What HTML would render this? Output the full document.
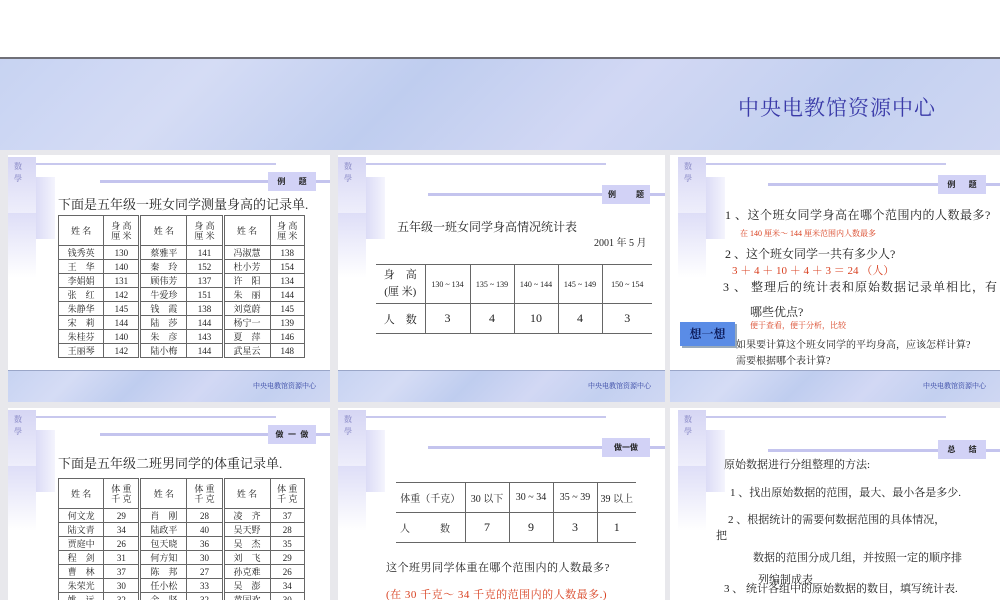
<!DOCTYPE html>
<html><head><meta charset="utf-8">
<style>
*{margin:0;padding:0;box-sizing:border-box}
body{width:1000px;height:600px;overflow:hidden;background:#e8e8ec;position:relative;font-family:"Liberation Serif","Noto Serif CJK SC",serif;color:#222}
.abs{position:absolute}
.tex{background:linear-gradient(135deg,#c7d3f2 0%,#d5dcf5 20%,#bfcdef 40%,#d2d8f4 60%,#c3d0f0 80%,#cfd7f3 100%)}
.slide{position:absolute;background:#fff;overflow:hidden}
.b1{position:absolute;left:0;top:2px;width:28px;height:56px;background:linear-gradient(#d6d6f4,#eeeefb)}
.b2{position:absolute;left:28px;top:22px;width:19px;height:62px;background:linear-gradient(90deg,#dcdcf6,#f4f4fd)}
.b3{position:absolute;left:0;top:58px;width:28px;height:65px;background:linear-gradient(#dedef7,#fff)}
.sx{position:absolute;left:6px;top:6px;font-size:8px;line-height:12px;color:#9a9ad0;font-weight:bold}
.l1{position:absolute;left:28px;top:8px;width:240px;height:2px;background:#c8c8ee}
.l2{position:absolute;left:92px;height:3px;width:240px;background:#c4c4ee}
.lab{position:absolute;left:260px;width:48px;height:19px;background:#d2d2f6;font-size:8px;font-weight:bold;line-height:19px;text-align:center;color:#222;font-family:"Liberation Sans","Noto Sans CJK SC",sans-serif}
.foot{position:absolute;left:0;top:215px;width:100%;height:32px;border-top:1px solid #9aa6c8}
.ft{position:absolute;right:14px;top:10px;font-size:7px;color:#3040a0}
table{border-collapse:collapse;position:absolute}
td{border:1px solid #666;text-align:center;padding:0}
.t1 td{font-size:9px;height:13.4px}
.t1 .h td{height:30px;line-height:10px}
.t1 td.d{border-right:3px double #666}
.red{color:#d84020}
</style></head><body>
<div class="abs" style="left:0;top:0;width:1000px;height:57px;background:#fff"></div>
<div class="abs tex" style="left:0;top:57px;width:1000px;height:93px;border-top:2px solid #707078"></div>
<div class="abs" style="left:738px;top:92px;font-size:21px;color:#3a3aa8;letter-spacing:1px">中央电教馆资源中心</div>

<!-- slide 1 -->
<div class="slide" style="left:8px;top:155px;width:322px;height:247px">
<div class="b1"></div><div class="b2"></div><div class="b3"></div><div class="sx">数<br>學</div>
<div class="l1"></div><div class="l2" style="top:25px"></div><div class="lab" style="top:17px">例&nbsp;&nbsp;&nbsp;&nbsp;&nbsp;&nbsp;题</div>
<div class="abs" style="left:50px;top:39px;font-size:13px">下面是五年级一班女同学测量身高的记录单.</div>
<table class="t1" style="left:50px;top:60px;width:247px">
<tr class="h"><td>姓 名</td><td class="d">身 高<br>厘 米</td><td>姓 名</td><td class="d">身 高<br>厘 米</td><td>姓 名</td><td>身 高<br>厘 米</td></tr>
<tr><td>钱秀英</td><td class="d">130</td><td>蔡雅平</td><td class="d">141</td><td>冯淑慧</td><td>138</td></tr>
<tr><td>王　华</td><td class="d">140</td><td>秦　玲</td><td class="d">152</td><td>杜小芳</td><td>154</td></tr>
<tr><td>李娟娟</td><td class="d">131</td><td>顾伟芳</td><td class="d">137</td><td>许　阳</td><td>134</td></tr>
<tr><td>张　红</td><td class="d">142</td><td>牛爱珍</td><td class="d">151</td><td>朱　丽</td><td>144</td></tr>
<tr><td>朱静华</td><td class="d">145</td><td>钱　霞</td><td class="d">138</td><td>刘竟蔚</td><td>145</td></tr>
<tr><td>宋　莉</td><td class="d">144</td><td>陆　莎</td><td class="d">144</td><td>杨宁一</td><td>139</td></tr>
<tr><td>朱桂芬</td><td class="d">140</td><td>朱　彦</td><td class="d">143</td><td>夏　萍</td><td>146</td></tr>
<tr><td>王丽琴</td><td class="d">142</td><td>陆小梅</td><td class="d">144</td><td>武星云</td><td>148</td></tr>
</table>
<div class="foot tex"><div class="ft">中央电教馆资源中心</div></div>
</div>

<!-- slide 2 -->
<div class="slide" style="left:338px;top:155px;width:327px;height:247px">
<div class="b1"></div><div class="b2"></div><div class="b3"></div><div class="sx">数<br>學</div>
<div class="l1"></div><div class="l2" style="top:38px;left:90px"></div><div class="lab" style="top:30px;left:264px">例&nbsp;&nbsp;&nbsp;&nbsp;&nbsp;&nbsp;&nbsp;&nbsp;&nbsp;题</div>
<div class="abs" style="left:59px;top:63px;font-size:12px">五年级一班女同学身高情况统计表</div>
<div class="abs" style="left:256px;top:79px;font-size:10px">2001 年 5 月</div>
<table style="left:38px;top:109px;width:276px;font-size:8px">
<tr style="height:39px"><td style="width:49px;border-left:none;font-size:11px;line-height:17px">身　高<br>(厘 米)</td><td style="width:45px">130 ~ 134</td><td style="width:44px">135 ~ 139</td><td style="width:44px">140 ~ 144</td><td style="width:44px">145 ~ 149</td><td style="border-right:none">150 ~ 154</td></tr>
<tr style="height:30px;font-size:12px"><td style="border-left:none;font-size:11px">人　数</td><td>3</td><td>4</td><td>10</td><td>4</td><td style="border-right:none">3</td></tr>
</table>
<div class="foot tex"><div class="ft">中央电教馆资源中心</div></div>
</div>

<!-- slide 3 -->
<div class="slide" style="left:670px;top:155px;width:330px;height:247px">
<div class="b1" style="left:8px"></div><div class="b2" style="left:36px"></div><div class="b3" style="left:8px"></div><div class="sx" style="left:14px">数<br>學</div>
<div class="l1" style="left:36px"></div><div class="l2" style="top:28px;left:98px"></div><div class="lab" style="top:20px;left:268px">例&nbsp;&nbsp;&nbsp;&nbsp;&nbsp;&nbsp;题</div>
<div class="abs" style="left:55px;top:51px;font-size:12px;letter-spacing:0.5px">1 、这个班女同学身高在哪个范围内的人数最多?</div>
<div class="abs red" style="left:70px;top:73px;font-size:8px">在 140 厘米～ 144 厘米范围内人数最多</div>
<div class="abs" style="left:55px;top:90px;font-size:12px">2 、这个班女同学一共有多少人?</div>
<div class="abs red" style="left:62px;top:107px;font-size:11px">3 ＋ 4 ＋ 10 ＋ 4 ＋ 3 ＝ 24 （人）</div>
<div class="abs" style="left:53px;top:123px;font-size:12px;letter-spacing:1px">3 、 整理后的统计表和原始数据记录单相比，有</div>
<div class="abs" style="left:80px;top:148px;font-size:12px">哪些优点?</div>
<div class="abs red" style="left:80px;top:165px;font-size:8px">便于查看，便于分析，比较</div>
<div class="abs" style="left:10px;top:167px;width:55px;height:24px;background:#5a8ce6;font-size:12px;font-weight:bold;line-height:24px;text-align:center;color:#102060;box-shadow:2px 2px 0 #9ab">想一想</div>
<div class="abs" style="left:66px;top:183px;font-size:10px;line-height:16px">如果要计算这个班女同学的平均身高，应该怎样计算?<br>需要根据哪个表计算?</div>
<div class="foot tex"><div class="ft">中央电教馆资源中心</div></div>
</div>

<!-- slide 4 -->
<div class="slide" style="left:8px;top:408px;width:322px;height:192px">
<div class="b1"></div><div class="b2"></div><div class="b3"></div><div class="sx">数<br>學</div>
<div class="l1"></div><div class="l2" style="top:25px"></div><div class="lab" style="top:17px">做&nbsp;&nbsp;一&nbsp;&nbsp;做</div>
<div class="abs" style="left:50px;top:45px;font-size:13px">下面是五年级二班男同学的体重记录单.</div>
<table class="t1" style="left:50px;top:70px;width:247px">
<tr class="h"><td>姓 名</td><td class="d">体 重<br>千 克</td><td>姓 名</td><td class="d">体 重<br>千 克</td><td>姓 名</td><td>体 重<br>千 克</td></tr>
<tr><td>何文龙</td><td class="d">29</td><td>肖　刚</td><td class="d">28</td><td>凌　齐</td><td>37</td></tr>
<tr><td>陆文青</td><td class="d">34</td><td>陆政平</td><td class="d">40</td><td>吴天野</td><td>28</td></tr>
<tr><td>贾庭中</td><td class="d">26</td><td>包天晓</td><td class="d">36</td><td>吴　杰</td><td>35</td></tr>
<tr><td>程　剑</td><td class="d">31</td><td>何方知</td><td class="d">30</td><td>刘　飞</td><td>29</td></tr>
<tr><td>曹　林</td><td class="d">37</td><td>陈　邦</td><td class="d">27</td><td>孙克难</td><td>26</td></tr>
<tr><td>朱荣光</td><td class="d">30</td><td>任小松</td><td class="d">33</td><td>吴　澎</td><td>34</td></tr>
<tr><td>姚　远</td><td class="d">32</td><td>金　坚</td><td class="d">32</td><td>黄国欢</td><td>30</td></tr>
</table>
</div>

<!-- slide 5 -->
<div class="slide" style="left:338px;top:408px;width:327px;height:192px">
<div class="b1"></div><div class="b2"></div><div class="b3"></div><div class="sx">数<br>學</div>
<div class="l1"></div><div class="l2" style="top:38px;left:90px"></div><div class="lab" style="top:30px;left:264px">做一做</div>
<table style="left:58px;top:74px;width:240px;font-size:10px">
<tr style="height:30px"><td style="width:69px;border-left:none">体重（千克）</td><td style="width:44px">30 以下</td><td style="width:44px">30 ~ 34</td><td style="width:44px">35 ~ 39</td><td style="border-right:none">39 以上</td></tr>
<tr style="height:30px;font-size:12px"><td style="border-left:none;font-size:10px;text-align:left;padding-left:4px">人　　　数</td><td>7</td><td>9</td><td>3</td><td style="border-right:none">1</td></tr>
</table>
<div class="abs" style="left:48px;top:151px;font-size:11px;letter-spacing:0.5px">这个班男同学体重在哪个范围内的人数最多?</div>
<div class="abs red" style="left:48px;top:178px;font-size:11px;letter-spacing:0.5px">(在 30 千克～ 34 千克的范围内的人数最多.)</div>
</div>

<!-- slide 6 -->
<div class="slide" style="left:670px;top:408px;width:330px;height:192px">
<div class="b1" style="left:8px"></div><div class="b2" style="left:36px"></div><div class="b3" style="left:8px"></div><div class="sx" style="left:14px">数<br>學</div>
<div class="l1" style="left:36px"></div><div class="l2" style="top:41px;left:98px"></div><div class="lab" style="top:32px;left:268px">总&nbsp;&nbsp;&nbsp;&nbsp;&nbsp;&nbsp;结</div>
<div class="abs" style="left:54px;top:48px;font-size:11px">原始数据进行分组整理的方法:</div>
<div class="abs" style="left:60px;top:76px;font-size:11px;white-space:nowrap">1 、找出原始数据的范围，最大、最小各是多少.</div>
<div class="abs" style="left:58px;top:103px;font-size:11px">2 、根据统计的需要何数据范围的具体情况，</div>
<div class="abs" style="left:46px;top:119px;font-size:11px">把</div>
<div class="abs" style="left:83px;top:141px;font-size:11px">数据的范围分成几组，并按照一定的顺序排</div>
<div class="abs" style="left:88px;top:163px;font-size:11px">列编制成表</div>
<div class="abs" style="left:54px;top:172px;font-size:11px;white-space:nowrap">3 、 统计各组中的原始数据的数目，填写统计表.</div>
</div>
</body></html>
